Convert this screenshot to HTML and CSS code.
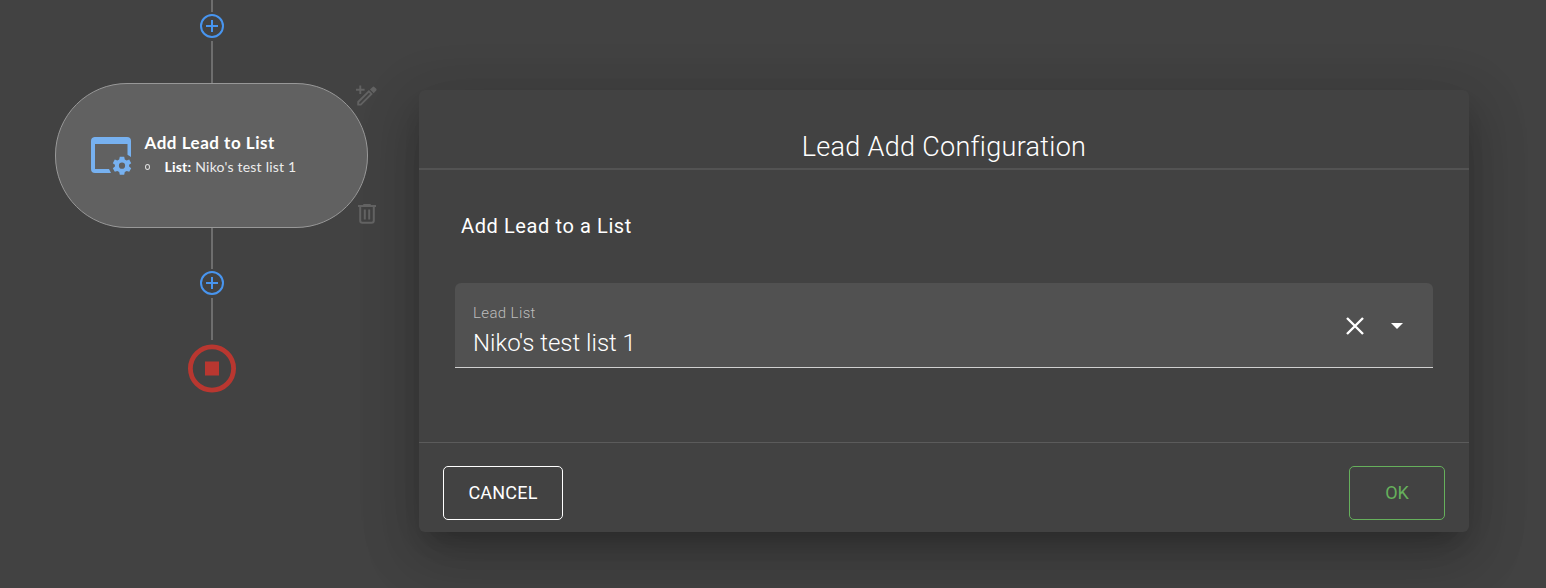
FILE: index.html
```html
<!DOCTYPE html>
<html lang="en">
<head>
<meta charset="utf-8">
<title>Lead Add Configuration</title>
<link rel="stylesheet" href="styles.css">
</head>
<body>
<main class="page">
  <section class="flow">
    <div class="line line-top"></div>
    <svg class="plus" viewBox="0 0 24 24"><circle cx="12" cy="12" r="11"/><path d="M12 6v12M6 12h12"/></svg>
    <div class="line"></div>
    <article class="node">
      <svg class="node-icon" viewBox="0 0 42 40">
        <path class="window" fill-rule="evenodd" d="M4.500 1H37A4 4 0 0 1 41 5V21L37.500 18.800V8H5V33H19L21 37H5A4 4 0 0 1 1 33V5A4 4 0 0 1 4.500 1Z"/>
        <g transform="translate(32 29.700)">
          <path fill-rule="evenodd" d="M-2.200-9H2.200L2.800-6.300 4.700-5.200 7.200-6.100 9.200-2.500 7.100-.9V.9L9.200 2.500 7.200 6.100 4.700 5.200 2.800 6.300 2.200 9H-2.200L-2.800 6.300-4.700 5.200-7.200 6.100-9.200 2.500-7.100.9V-.9L-9.200-2.500-7.200-6.100-4.700-5.200-2.800-6.300ZM0-3.100A3.100 3.100 0 1 0 0 3.100 3.100 3.100 0 1 0 0-3.100Z"/>
        </g>
      </svg>
      <div class="node-text">
        <h3 class="node-title">Add Lead to List</h3>
        <div class="node-detail"><i class="bullet"></i><b class="node-key">List:</b><span class="node-value">Niko's test list 1</span></div>
      </div>
      <svg class="edit" viewBox="0 0 22 22"><path class="stroke" d="M2.300 17.300V20H5L16.200 8.800 13.500 6.100ZM4.500 0V9M0 4.500H9"/><path d="M14.600 4.200 17.400 1.500Q18.300 .8 19.200 1.500L21.200 3.400Q22 4.300 21.200 5.200L18.500 8Z"/></svg>
      <svg class="trash" viewBox="0 0 18 20"><path class="stroke" d="M2.200 3V16.500Q2.200 18.800 4.400 18.800H13.600Q15.800 18.800 15.800 16.500V3M0 2H18M6.800 5.500V15.500M11.200 5.500V15.500"/><path d="M5.500 0H12.500L13.500 2H4.500Z"/></svg>
    </article>
    <div class="line"></div>
    <svg class="plus" viewBox="0 0 24 24"><circle cx="12" cy="12" r="11"/><path d="M12 6v12M6 12h12"/></svg>
    <div class="line"></div>
    <svg class="stop" viewBox="0 0 48 48"><circle cx="24" cy="24.500" r="21.600"/><rect x="17" y="17.500" width="14" height="14"/></svg>
  </section>

  <section class="dialog">
    <header class="dialog-head"><h1 class="dialog-title">Lead Add Configuration</h1></header>
    <div class="dialog-body">
      <h2 class="subtitle">Add Lead to a List</h2>
      <div class="field">
        <div class="field-text">
          <div class="field-label">Lead List</div>
          <div class="field-value">Niko's test list 1</div>
        </div>
        <svg class="clear" viewBox="0 0 18 18"><path d="M1 1 17 17M17 1 1 17"/></svg>
        <svg class="caret" viewBox="0 0 12 6"><path d="M0 0H12L6 6Z"/></svg>
      </div>
    </div>
    <footer class="dialog-foot">
      <button class="btn cancel"><span class="cancel-label">CANCEL</span></button>
      <button class="btn ok"><span class="ok-label">OK</span></button>
    </footer>
  </section>
</main>
</body>
</html>
```
FILE: styles.css
```css
* { box-sizing: border-box; }
body { margin: 0; background: #424242; font-family: Roboto, sans-serif; color: #fff; }
h1, h2, h3 { margin: 0; }
svg { display: block; flex: none; overflow: visible; }
.page { display: flex; width: 1546px; height: 588px; overflow: hidden; }

.flow { display: flex; flex-direction: column; align-items: center; flex: none; width: 419px; padding-right: 50px; padding-left: 55px; }
.line { width: 2px; height: 42px; flex: none; background: #6e6e6e; }
.line-top { height: 12px; }
.plus { width: 24px; height: 24px; margin: 2px 0 3px; fill: none; stroke: #4895ef; stroke-width: 2; }
.stop { width: 48px; height: 48px; margin-top: 4px; fill: #b93730; }
.stop circle { fill: none; stroke: #b93730; stroke-width: 4.800; }

.node { position: relative; display: flex; flex: none; width: 313px; height: 145px; margin-top: -.5px; margin-bottom: -.5px; margin-left: -1px; padding: 52px 0 0 33.5px; border: 1px solid #989898; border-radius: 72px; background: #616161; font-family: Lato, sans-serif; }
.node-icon { width: 42px; height: 40px; fill: #77b1f0; }
.node-text { margin-top: -3px; padding-left: 13px; }
.node-title { font-size: 17px; line-height: 20px; font-weight: 700; letter-spacing: .52px; white-space: nowrap; }
.node-detail { display: flex; align-items: center; margin-top: 4px; font-size: 14px; line-height: 20px; white-space: nowrap; }
.bullet { width: 5px; height: 6px; border: 1px solid #ddd; border-radius: 50%; }
.node-key { margin-left: 15px; letter-spacing: .2px; }
.node-value { margin-left: 4px; color: #ececec; letter-spacing: .22px; }
.edit, .trash { position: absolute; fill: #626262; }
.edit { width: 21px; height: 22px; right: -10px; top: 1px; }
.trash { width: 18px; height: 20px; right: -9px; top: 120px; }
.stroke { fill: none; stroke: #626262; stroke-width: 2; }

.dialog { display: flex; flex-direction: column; width: 1050px; height: 442px; margin-top: 90px; flex: none; border-radius: 6px; background: #424242; box-shadow: 0 16px 22px -10px rgba(0,0,0,.2), 0 24px 57px 4px rgba(0,0,0,.14), 0 13px 60px 6px rgba(0,0,0,.12); }
.dialog-head { height: 80px; padding-top: 41px; border-bottom: 2px solid #535353; text-align: center; }
.dialog-title { font-size: 27px; line-height: 32px; font-weight: 300; letter-spacing: .3px; }
.dialog-body { height: 272px; padding: 42px 36px 0; }
.subtitle { padding-left: 6px; font-size: 20px; line-height: 28px; font-weight: 400; letter-spacing: .6px; }
.field { display: flex; height: 85px; margin-top: 43px; padding: 0 30px 0 18px; border-bottom: 1px solid #d0d0d0; border-radius: 6px 6px 0 0; background: #515151; }
.field-text { flex: 1; padding-top: 20px; }
.field-label { font-size: 15px; line-height: 20px; font-weight: 300; letter-spacing: .38px; color: #bdbdbd; }
.field-value { margin-top: 4px; font-size: 24px; line-height: 32px; font-weight: 300; }
.clear { width: 18px; height: 18px; margin-top: 34px; fill: none; stroke: #fff; stroke-width: 2.400; }
.caret { width: 12px; height: 6px; margin: 40px 0 0 27px; fill: #fff; }
.dialog-foot { display: flex; justify-content: space-between; flex: 1; padding: 23px 24px 0; border-top: 1px solid #5b5b5b; }
.btn { height: 54px; padding: 0; border: 1px solid currentColor; border-radius: 5px; background: none; font: 400 18px/24px Roboto, sans-serif; color: #fff; }
.cancel { width: 120px; letter-spacing: .2px; }
.ok { width: 96px; color: #66b05c; }
```
